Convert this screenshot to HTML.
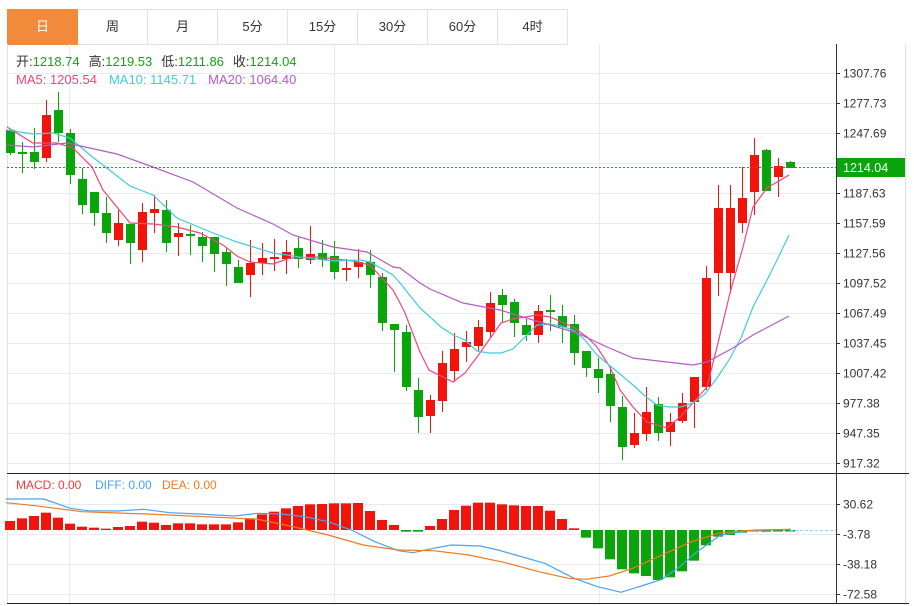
<!DOCTYPE html>
<html><head><meta charset="utf-8"><style>
body{margin:0;background:#fff;width:914px;height:606px;overflow:hidden;font-family:"Liberation Sans","Noto Sans CJK SC",sans-serif}
.tabs{position:absolute;left:7px;top:9px;height:35px;display:flex}
.tab{width:69px;height:34px;border:1px solid #dde2e8;border-left:none;text-align:center;line-height:34px;font-size:13px;color:#333}
.tab:first-child{border-left:1px solid #dde2e8;background:#f28a3c;color:#fff;border-color:#f28a3c}
svg{position:absolute;left:0;top:0}
</style></head><body>
<div class="tabs"><div class="tab">日</div><div class="tab">周</div><div class="tab">月</div><div class="tab">5分</div><div class="tab">15分</div><div class="tab">30分</div><div class="tab">60分</div><div class="tab">4时</div></div>
<svg id="s" width="914" height="606" xmlns="http://www.w3.org/2000/svg" font-family="Liberation Sans, Noto Sans CJK SC, sans-serif"></svg>
<script>
var s=document.getElementById('s'),h='';
function L(x1,y1,x2,y2,c,w,d){h+='<line x1="'+x1+'" y1="'+y1+'" x2="'+x2+'" y2="'+y2+'" stroke="'+c+'" stroke-width="'+(w||1)+'"'+(d?' stroke-dasharray="'+d+'"':'')+'/>';}
function T(x,y,t,c,sz){h+='<text x="'+x+'" y="'+y+'" fill="'+c+'" font-size="'+(sz||12)+'">'+t+'</text>';}
// grid
var gy=[73,103,133,163,193,223,253,283,313,343,373,403,433,463];
gy.forEach(function(y){L(7,y+.5,836,y+.5,'#e6ebf0');});
[69,334,599].forEach(function(x){L(x+.5,44,x+.5,603,'#e6ebf0');});
[504,534,564,594].forEach(function(y){L(7,y+.5,836,y+.5,'#e6ebf0');});
L(7.5,44,7.5,604,'#dde2e8');L(905.5,44,905.5,604,'#dde2e8');
// candles [x idx, top body, bottom body, high, low, color]
var C=[[130,153,130,155,'g'],[152,153,142,173,'g'],[152,162,128,169,'g'],[115,158,100,162,'r'],[110,133,92,142,'g'],[133,175,129,184,'g'],[179,205,168,214,'g'],[192,213,192,226,'g'],[213,233,197,243,'g'],[223,240,210,246,'r'],[224,243,224,264,'g'],[212,250,203,262,'r'],[209,213,195,233,'r'],[210,243,200,252,'g'],[233,237,223,256,'r'],[234,236,225,255,'g'],[237,246,232,262,'g'],[237,254,237,272,'g'],[252,264,247,286,'g'],[267,283,260,283,'g'],[263,275,240,297,'r'],[258,263,243,275,'r'],[257,259,239,271,'r'],[252,259,240,274,'r'],[248,259,237,268,'g'],[254,260,226,264,'r'],[253,260,240,267,'g'],[256,272,241,279,'g'],[268,270,259,281,'r'],[262,267,249,278,'r'],[262,275,250,288,'g'],[277,323,273,331,'g'],[324,330,324,372,'g'],[332,387,325,391,'g'],[390,417,378,433,'g'],[400,416,395,433,'r'],[363,401,351,412,'r'],[349,371,333,382,'r'],[342,347,331,362,'r'],[327,346,320,351,'r'],[303,332,292,337,'r'],[295,305,289,322,'g'],[302,323,299,337,'g'],[325,335,319,341,'g'],[311,335,305,343,'r'],[310,311,295,331,'g'],[316,327,305,343,'g'],[324,353,315,365,'g'],[351,368,351,377,'g'],[369,378,358,393,'g'],[374,406,366,422,'g'],[407,447,396,460,'g'],[433,445,413,448,'r'],[412,434,387,441,'r'],[404,433,397,441,'g'],[422,432,413,446,'r'],[403,421,393,423,'r'],[377,402,377,428,'r'],[278,387,266,390,'r'],[208,273,185,296,'r'],[208,273,185,293,'r'],[198,223,167,233,'r'],[155,192,138,215,'r'],[150,191,149,191,'g'],[166,177,158,197,'r'],[162,168,161,168,'g']];
var R='#f2140a',G='#0aa50a';
C.forEach(function(c,i){var x=10+12*i,col=c[4]=='r'?R:G;L(x+.5,c[2],x+.5,c[3],col);h+='<rect x="'+(x-4)+'" y="'+c[0]+'" width="9" height="'+Math.max(2,c[1]-c[0])+'" fill="'+col+'"/>';});
function P(pts,c){h+='<polyline fill="none" stroke="'+c+'" stroke-width="1.2" points="'+pts.map(function(p){return p.join(',')}).join(' ')+'"/>';}
P([[7,127],[33,143],[57,143],[73,148],[92,167],[103,190],[130,223],[153,224],[177,227],[200,233],[223,245],[237,256],[250,262],[273,264],[290,258],[317,257],[353,261],[370,265],[393,290],[400,303],[405,313],[420,352],[429,370],[453,382],[465,373],[477,357],[489,340],[501,323],[513,319],[537,315],[550,317],[573,327],[587,337],[597,347],[610,367],[620,390],[633,407],[647,422],[667,428],[680,417],[693,403],[707,387],[717,347],[730,293],[743,247],[753,207],[767,188],[789,175]],'#f0457d');
P([[7,130],[33,134],[53,133],[70,138],[90,155],[130,186],[153,195],[177,218],[213,233],[237,242],[273,253],[300,257],[333,261],[360,260],[370,262],[393,275],[400,283],[420,308],[429,316],[441,327],[453,335],[465,340],[477,351],[489,353],[501,353],[513,349],[525,337],[537,325],[549,324],[561,326],[573,330],[585,340],[597,355],[609,365],[621,375],[633,385],[645,396],[657,405],[669,407],[681,407],[693,403],[705,394],[717,378],[729,360],[741,338],[753,307],[765,284],[777,260],[789,235]],'#3fcbe0');
P([[7,145],[33,147],[67,143],[117,154],[153,167],[193,182],[237,208],[273,224],[293,235],[333,247],[367,252],[393,267],[400,268],[420,283],[430,289],[463,303],[500,310],[533,320],[577,333],[607,347],[633,358],[667,362],[693,365],[707,362],[733,348],[753,335],[789,316]],'#b55ac8');
L(7,167.5,836,167.5,'#1a9e1a',1,'2,2');
// axis
L(836.5,44,836.5,604,'#333');
var lab=['1307.76','1277.73','1247.69','','1187.63','1157.59','1127.56','1097.52','1067.49','1037.45','1007.42','977.38','947.35','917.32'];
gy.forEach(function(y,i){L(836,y+.5,840,y+.5,'#333');if(lab[i])T(843,y+4.5,lab[i],'#333',12);});
h+='<rect x="837" y="158" width="68" height="19" fill="#0aa50a"/>';T(843,172,'1214.04','#fff',12.5);
L(7,473.5,909,473.5,'#222');L(7,603.5,909,603.5,'#222');
// macd
var tops=[183,175,168,158,173,191,200,203,206,201,198,185,188,195,190,190,193,193,193,187,175,163,155,145,138,133,132,130,130,129,153,180,195,-215,-215,198,177,150,137,128,128,133,136,138,138,152,177,205,-233,-265,-298,-328,-340,-348,-360,-352,-334,-302,-256,-230,-225,-218,-213,-215,-212,-210];
tops.forEach(function(t,i){var x=10+12*i;if(t>0){var y=460+t/3;h+='<rect x="'+(x-5)+'" y="'+y+'" width="10" height="'+(530-y)+'" fill="'+R+'"/>';}else{var y=460-t/3;h+='<rect x="'+(x-5)+'" y="530" width="10" height="'+Math.max(1.5,y-530)+'" fill="'+G+'"/>';}});
L(790,530.5,836,530.5,'#9cd0f0',1,'3,2');
function Q(pts,c){P(pts.map(function(p){return [(p[0]/1.707).toFixed(1),(460+p[1]/3).toFixed(1)]}),c);}
Q([[10,117],[75,117],[120,145],[150,152],[200,153],[245,148],[290,158],[340,162],[400,168],[440,160],[480,162],[520,170],[560,185],[600,210],[640,245],[680,272],[705,278],[740,265],[770,255],[820,258],[850,270],[880,285],[930,310],[980,355],[1020,380],[1060,397],[1100,375],[1130,358],[1160,320],[1190,275],[1230,225],[1280,212],[1350,208]],'#4aa3f0');
Q([[10,128],[60,137],[140,155],[250,162],[350,170],[440,178],[500,200],[560,225],[620,255],[680,270],[740,272],[800,285],[860,307],[920,335],[970,355],[1000,358],[1040,348],[1080,325],[1130,285],[1180,245],[1230,218],[1290,210],[1350,208]],'#f07a20');
[['30.62',504],['-3.78',534],['-38.18',564],['-72.58',594]].forEach(function(a){L(836,a[1]+.5,840,a[1]+.5,'#333');T(843,a[1]+4.5,a[0],'#333',12);});
T(16,489,'MACD: 0.00','#f03c3c',12);T(95,489,'DIFF: 0.00','#4aa3f0',12);T(162,489,'DEA: 0.00','#f07a20',12);
// legend
h+='<text x="16" y="66" font-size="13"><tspan fill="#333">开:</tspan><tspan fill="#1a9e1a">1218.74</tspan><tspan fill="#333" dx="9">高:</tspan><tspan fill="#1a9e1a">1219.53</tspan><tspan fill="#333" dx="9">低:</tspan><tspan fill="#1a9e1a">1211.86</tspan><tspan fill="#333" dx="9">收:</tspan><tspan fill="#1a9e1a">1214.04</tspan></text>';
h+='<text x="16" y="84" font-size="13"><tspan fill="#f0457d">MA5: 1205.54</tspan><tspan fill="#3fcbe0" dx="12">MA10: 1145.71</tspan><tspan fill="#b55ac8" dx="12">MA20: 1064.40</tspan></text>';
s.innerHTML=h;
</script>
</body></html>
